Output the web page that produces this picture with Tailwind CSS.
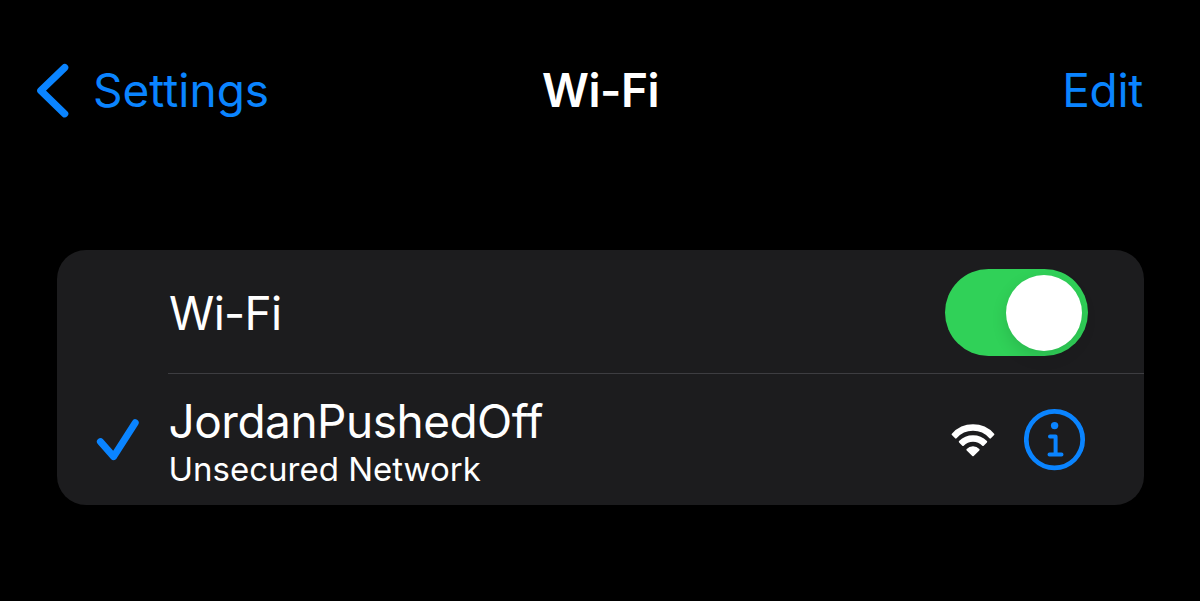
<!DOCTYPE html>
<html lang="en">
<head>
<meta charset="utf-8">
<title>Wi-Fi</title>
<script src="https://cdn.jsdelivr.net/npm/@tailwindcss/browser@4"></script>
</head>
<body class="h-[601px] overflow-hidden bg-black font-['Inter',sans-serif] text-white antialiased">
<header class="grid h-[180px] grid-cols-3 items-center pl-9 pr-[57px] text-[46px] leading-none">
  <a class="flex items-center text-[#0a84ff]">
    <svg class="h-14 w-[57px] shrink-0" viewBox="0 0 57 56" fill="none" stroke="currentColor" stroke-width="7.2" stroke-linecap="round" stroke-linejoin="round"><path d="M28.7 5.6 4.8 28.7 28.7 51.8"/></svg>
    <span class="whitespace-nowrap">Settings</span>
  </a>
  <h1 class="pl-[22px] text-center font-semibold tracking-[-0.5px]">Wi-Fi</h1>
  <a class="text-right tracking-[-0.3px] text-[#0a84ff]">Edit</a>
</header>
<main class="ml-[56.5px] mt-[70px] h-[255px] w-[1087.5px] overflow-hidden rounded-[29px] bg-[#1c1c1e]">
  <div class="flex h-[123px] items-center justify-between pl-[112.5px] pr-14 pt-[2px]">
    <span class="text-[46px] leading-none tracking-[-0.7px]">Wi-Fi</span>
    <div class="flex h-[87px] w-[143px] items-center justify-end rounded-full bg-[#30d158] pr-[6px]">
      <div class="size-[76px] rounded-full bg-white shadow-[0_6px_16px_rgba(0,0,0,0.12)]"></div>
    </div>
  </div>
  <div class="ml-[111px] h-px bg-[#3d3d41]"></div>
  <div class="flex h-[132px] items-center">
    <svg class="ml-[39.5px] h-[44px] w-[44px] shrink-0" viewBox="0 0 44 44" fill="none" stroke="#0a84ff" stroke-width="7" stroke-linecap="round" stroke-linejoin="round"><path d="M4.4 23.6 17.6 38.6 39.2 4.8"/></svg>
    <div class="ml-[28.5px] flex-1 whitespace-nowrap pt-[6px]">
      <div class="text-[46px] leading-[52px] tracking-[-0.5px]">JordanPushedOff</div>
      <div class="text-[33px] leading-[44px]">Unsecured Network</div>
    </div>
    <svg class="h-[34px] w-[46px]" viewBox="0 0 46 34" fill="#fff" stroke="#fff" stroke-width="2" stroke-linejoin="round"><path d="M2.6 11.3A27.6 27.6 0 0 1 43.4 11.3L40.2 14.6A23 23 0 0 0 5.8 14.6Z"/><path d="M9.8 18.8A18.5 18.5 0 0 1 36.2 18.8L33 22A14 14 0 0 0 13 22Z"/><path d="M17.4 26.8A7.6 7.6 0 0 1 28.6 26.8L23 32.2Z"/></svg>
    <svg class="ml-7 mr-[58px] size-[62px] shrink-0" viewBox="0 0 62 62" fill="none" stroke="#0a84ff"><circle cx="30.5" cy="30.6" r="28.2" stroke-width="4.7"/><circle cx="30.6" cy="16.6" r="3.7" fill="#0a84ff" stroke="none"/><path d="M26 27.4H31.6V45.6M25.5 45.6H37.5" stroke-width="4" stroke-linecap="round" stroke-linejoin="round"/></svg>
  </div>
</main>
</body>
</html>
